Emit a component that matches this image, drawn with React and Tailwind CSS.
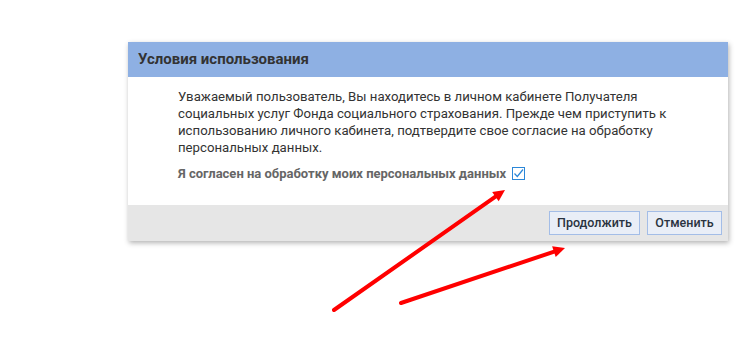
import React from 'react';

function Arrow({ x1, y1, x2, y2 }) {
  // arrow head at (x2, y2)
  const ang = Math.atan2(y2 - y1, x2 - x1);
  const len = 13;
  const spread = 0.45;
  const ax = x2 - len * Math.cos(ang - spread);
  const ay = y2 - len * Math.sin(ang - spread);
  const bx = x2 - len * Math.cos(ang + spread);
  const by = y2 - len * Math.sin(ang + spread);
  const ex = x2 - 9 * Math.cos(ang);
  const ey = y2 - 9 * Math.sin(ang);
  return (
    <g>
      <line x1={x1} y1={y1} x2={ex} y2={ey} stroke="#ff0000" strokeWidth="4" strokeLinecap="round" />
      <polygon points={`${x2},${y2} ${ax},${ay} ${bx},${by}`} fill="#ff0000" />
    </g>
  );
}

export default function App() {
  return (
    <div className="relative w-[739px] h-[358px] bg-white overflow-hidden font-['Roboto',_'Liberation_Sans',_sans-serif]">
      <div className="ml-[128px] mt-[42px] w-[600px] bg-white shadow-[1px_2px_5px_rgba(0,0,0,0.3)]">
        <div className="h-[35px] bg-[#8eb0e3] flex items-center pl-[10px]">
          <h2 className="text-[15px] font-bold text-[#333]">Условия использования</h2>
        </div>
        <div className="pl-[50px] pr-[48px] pt-[11px] pb-[23px]">
          <p className="text-[13.2px] leading-[17px] text-[#333]">
            Уважаемый пользователь, Вы находитесь в личном кабинете Получателя социальных услуг Фонда социального страхования. Прежде чем приступить к использованию личного кабинета, подтвердите свое согласие на обработку персональных данных.
          </p>
          <label className="mt-[9px] flex items-center gap-[6px] text-[13px] leading-[17px] font-bold text-[#666]">
            Я согласен на обработку моих персональных данных
            <span className="w-[13px] h-[13px] border border-[#2b87d8] flex items-center justify-center">
              <svg width="11" height="11" viewBox="0 0 11 11">
                <path d="M1.5 5.5 L4.3 8.5 L10 1.5" fill="none" stroke="#2b87d8" strokeWidth="1.2" />
              </svg>
            </span>
          </label>
        </div>
        <div className="h-[36px] bg-[#e6e6e6] flex items-center justify-end gap-[7px] pr-[6px]">
          <button className="h-[24px] w-[91px] bg-[#e9eef7] border border-[#a3bde7] text-[12.5px] font-medium text-[#2a3340]">Продолжить</button>
          <button className="h-[24px] w-[75px] bg-[#e9eef7] border border-[#a3bde7] text-[12.5px] font-medium text-[#2a3340]">Отменить</button>
        </div>
      </div>
      <svg className="absolute left-0 top-0" width="739" height="358">
        <Arrow x1={334} y1={310} x2={505} y2={190} />
        <Arrow x1={401} y1={303} x2={565} y2={248} />
      </svg>
    </div>
  );
}
